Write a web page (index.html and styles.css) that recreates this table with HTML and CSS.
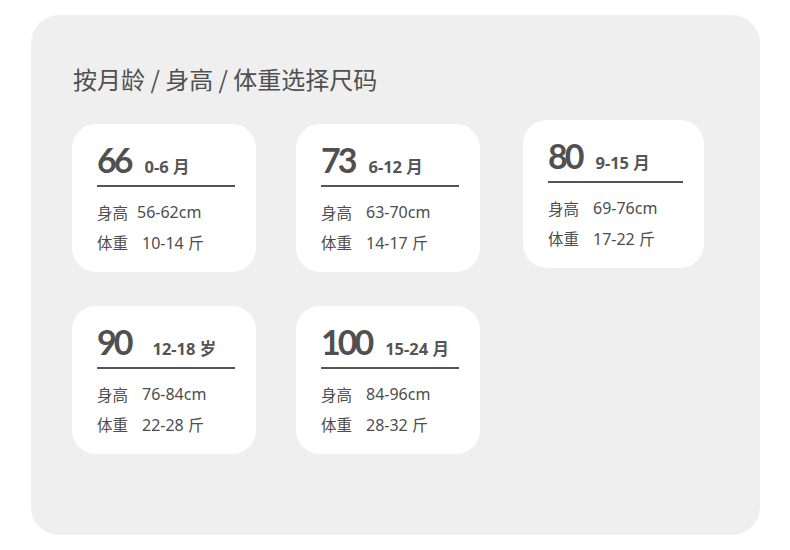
FILE: index.html
```html
<!DOCTYPE html>
<html lang="zh">
<head>
<meta charset="utf-8">
<title>尺码选择</title>
<link rel="stylesheet" href="styles.css">
</head>
<body>
<div class="panel">
  <h1 class="title">按月龄 / 身高 / 体重选择尺码</h1>
  <div class="grid">
    <div class="card">
      <div class="head"><span class="size">66</span><span class="age">0-6 月</span></div>
      <div class="row"><span class="label label-tight">身高</span><span class="val">56-62cm</span></div>
      <div class="row"><span class="label">体重</span><span class="val">10-14 斤</span></div>
    </div>
    <div class="card">
      <div class="head"><span class="size">73</span><span class="age">6-12 月</span></div>
      <div class="row"><span class="label">身高</span><span class="val">63-70cm</span></div>
      <div class="row"><span class="label">体重</span><span class="val">14-17 斤</span></div>
    </div>
    <div class="card card-shift">
      <div class="head"><span class="size">80</span><span class="age">9-15 月</span></div>
      <div class="row"><span class="label">身高</span><span class="val">69-76cm</span></div>
      <div class="row"><span class="label">体重</span><span class="val">17-22 斤</span></div>
    </div>
    <div class="card">
      <div class="head"><span class="size">90</span><span class="age age-wide">12-18 岁</span></div>
      <div class="row"><span class="label">身高</span><span class="val">76-84cm</span></div>
      <div class="row"><span class="label">体重</span><span class="val">22-28 斤</span></div>
    </div>
    <div class="card">
      <div class="head"><span class="size">100</span><span class="age">15-24 月</span></div>
      <div class="row"><span class="label">身高</span><span class="val">84-96cm</span></div>
      <div class="row"><span class="label">体重</span><span class="val">28-32 斤</span></div>
    </div>
  </div>
</div>
</body>
</html>
```

FILE: styles.css
```css
html, body {
  margin: 0;
  padding: 0;
  background: #ffffff;
}

body {
  font-family: "Noto Sans", "Noto Sans CJK SC", sans-serif;
  color: #555555;
}

.panel {
  box-sizing: border-box;
  width: 729px;
  height: 520px;
  margin: 15px 0 0 31px;
  padding: 48px 0 0 41px;
  background: #efefef;
  border-radius: 28px;
}

.title {
  margin: 0 0 29px 1px;
  font-family: "Noto Sans CJK SC", sans-serif;
  font-size: 24px;
  font-weight: 400;
  line-height: 32px;
  color: #505050;
}

.grid {
  display: grid;
  grid-template-columns: repeat(3, 184px);
  column-gap: 40px;
  row-gap: 34px;
  align-items: start;
}

.card {
  box-sizing: border-box;
  height: 148px;
  padding: 16px 21px 0 25px;
  background: #ffffff;
  border-radius: 24px;
}

.card-shift {
  margin: -4px 0 0 3px;
}

.head {
  display: flex;
  align-items: baseline;
  height: 45px;
  border-bottom: 2px solid #555555;
  margin-bottom: 10px;
}

.size {
  font-family: "Lato", sans-serif;
  font-weight: 700;
  font-size: 34px;
  line-height: 40px;
  letter-spacing: -3px;
  color: #505050;
}

.age {
  margin-left: 14px;
  font-family: "Noto Sans", "Noto Sans CJK SC", sans-serif;
  font-weight: 700;
  font-size: 16.5px;
  color: #555555;
}

.age-wide {
  margin-left: 22px;
}

.row {
  display: flex;
  align-items: center;
  height: 30px;
  font-size: 15.5px;
}

.label {
  font-family: "Noto Sans CJK SC", sans-serif;
  width: 45px;
  flex: none;
  color: #4d4d4d;
}

.label-tight {
  width: 40px;
}

.val {
  font-family: "Noto Sans", "Noto Sans CJK SC", sans-serif;
  font-size: 16px;
  color: #4d4d4d;
}
```
